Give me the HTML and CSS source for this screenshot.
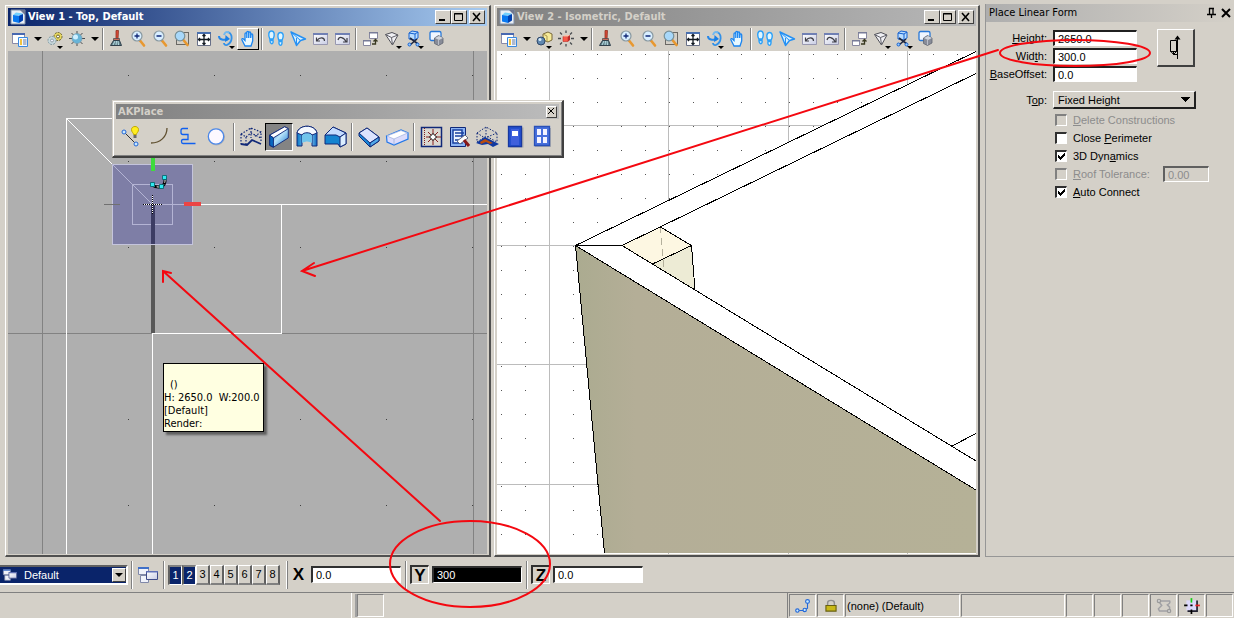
FILE: index.html
```html
<!DOCTYPE html>
<html lang="en">
<head>
<meta charset="utf-8">
<title>Place Linear Form</title>
<link rel="stylesheet" href="styles.css">
</head>
<body>
<svg class="defs" aria-hidden="true">
  <defs>
    <linearGradient id="blue" x1="0" y1="0" x2="1" y2="1"><stop offset="0" stop-color="#0a5ec0"/><stop offset=".5" stop-color="#b8e4fa"/><stop offset="1" stop-color="#1070c8"/></linearGradient>
    <linearGradient id="blueh" x1="0" y1="0" x2="1" y2="0"><stop offset="0" stop-color="#0878c8"/><stop offset=".6" stop-color="#a8dcfa"/><stop offset="1" stop-color="#0868c0"/></linearGradient>
    <linearGradient id="pane" x1="0" y1="0" x2="1" y2="1"><stop offset="0" stop-color="#fff"/><stop offset="1" stop-color="#c8cce4"/></linearGradient>
    <linearGradient id="wall" x1="0" y1="0" x2="1" y2="0"><stop offset="0" stop-color="#abab90"/><stop offset=".15" stop-color="#b4ae97"/><stop offset="1" stop-color="#b5b197"/></linearGradient>
    <pattern id="dots1" x="128" y="75" width="86" height="86" patternUnits="userSpaceOnUse"><rect width="1" height="1" fill="#404040"/></pattern>
    <pattern id="dots2" x="501" y="54" width="24" height="24" patternUnits="userSpaceOnUse"><rect width="1" height="1" fill="#555"/></pattern>
  </defs>
  <symbol id="app" viewBox="0 0 16 16"><path d="M1 1h14v14H1z" fill="#e8eef4" stroke="#8090a8"/><path d="M10 1l5 5V1z" fill="#707890"/><path d="M3 6l3-2.500 7 1-2 2z" fill="#70d0ff"/><path d="M3 6l6 .8V14l-6-1.500z" fill="#0878f0"/><path d="M9 6.800l4-1.800v6.500L9 14z" fill="#0040b0"/></symbol>
  <symbol id="attrs" viewBox="0 0 20 20"><path d="M2.500 4.500h12v10h-12z" fill="#fff" stroke="#8a8aa8"/><path d="M2 4h13v2H2z" fill="#4868b0"/><path d="M8.500 8.500h9v9h-9z" fill="#f4faff" stroke="#3888e0"/><path d="M10 11h2M10 13h2M10 15h2" stroke="#f0b000" stroke-width="1.500"/><path d="M13 11h3.500M13 13h3.500M13 15h3.500" stroke="#6878a0"/></symbol>
  <symbol id="styles-a" viewBox="0 0 20 20"><circle cx="13" cy="7.500" r="4" fill="#e8d860" stroke="#686030" stroke-dasharray="2 1"/><circle cx="13" cy="7.500" r="1.500" fill="#fff" stroke="#686030"/><circle cx="7" cy="11.500" r="4" fill="#c8d8dc" stroke="#8098a0" stroke-dasharray="2 1"/><circle cx="7" cy="11.500" r="1.500" fill="#eef" stroke="#90a0a8"/><path d="M12 17h6l-3 3z" fill="#000"/></symbol>
  <symbol id="styles-b" viewBox="0 0 20 20"><path d="M9 5l5-2 4 2v6l-4 2-5-2z" fill="#f6ea98" stroke="#786838"/><path d="M9 5l4 2v6" fill="none" stroke="#aa9850"/><circle cx="7" cy="12" r="4" fill="#6088b0" stroke="#304868"/><circle cx="6" cy="10.500" r="1.500" fill="#d8ecfa"/><path d="M12 17h6l-3 3z" fill="#000"/></symbol>
  <symbol id="sun-a" viewBox="0 0 20 20"><path d="M10 2v15M2 9.500h16M4.500 4l11 11M15.500 4l-11 11" stroke="#484c50"/><circle cx="10" cy="9.500" r="5" fill="#68b4d8" stroke="#7898a8" stroke-width=".6"/><circle cx="8.500" cy="8" r="2.500" fill="#d0f0ff"/></symbol>
  <symbol id="sun-b" viewBox="0 0 20 20"><path d="M10 1.500v2.500M10 15v2.500M2 9.500h3M15 9.500h3M4 3.500l2 2M16 3.500l-2 2M4 15.500l2-2M16 15.500l-2-2" stroke="#484c50" stroke-width="1.300"/><path d="M7 7.500h5v5H7z" fill="#f85848" stroke="#c03028" stroke-width=".6"/><path d="M7 7.500l2-1.500h5l-2 1.500z" fill="#ffc0a8"/><path d="M12 7.500l2-1.500v5l-2 1.500z" fill="#b82828"/></symbol>
  <symbol id="brush" viewBox="0 0 20 20"><path d="M10 1.500h2.500L12 10h-2z" fill="#d84838" stroke="#903020" stroke-width=".8"/><path d="M7.500 9.500h6v2h-6z" fill="#c86858" stroke="#404850" stroke-width=".7"/><path d="M7.500 11.500h6l2 5h-11z" fill="#608088" stroke="#30404c"/><path d="M7 16l2-4M10 16l.5-4M12.500 16l-.5-4" stroke="#b8dce4"/></symbol>
  <symbol id="lens" viewBox="0 0 20 20"><path d="M12 11.500l4 5" stroke="#e89830" stroke-width="2.600" stroke-linecap="round"/><circle cx="9" cy="7" r="5" fill="#d8eeff" stroke="#8898a0" stroke-width="1.200"/></symbol>
  <symbol id="zin" viewBox="0 0 20 20"><use href="#lens"/><path d="M6.500 7h5M9 4.500v5" stroke="#102878" stroke-width="1.300"/></symbol>
  <symbol id="zout" viewBox="0 0 20 20"><use href="#lens"/><path d="M6.500 7h5" stroke="#102878" stroke-width="1.500"/></symbol>
  <symbol id="zwin" viewBox="0 0 20 20"><path d="M4.500 3.500h12v12h-12z" fill="none" stroke="#000" stroke-dasharray="1 1"/><path d="M11 10.500l4.500 5.500" stroke="#e89830" stroke-width="2.600" stroke-linecap="round"/><circle cx="8" cy="7" r="4.800" fill="#a8d8fa" stroke="#789098" stroke-width="1.200"/></symbol>
  <symbol id="fit" viewBox="0 0 20 20"><path d="M3.500 3.500h13v13h-13z" fill="#fff" stroke="#687088"/><path d="M3 3h14v2H3z" fill="#4870b0"/><path d="M10 5.500v10M4.500 10.500h11M8.500 7L10 5.500 11.500 7M8.500 14l1.500 1.500 1.500-1.500M6 9l-1.500 1.500L6 12M14 9l1.500 1.500L14 12" fill="none" stroke="#101820" stroke-width="1.300"/></symbol>
  <symbol id="rot" viewBox="0 0 20 20"><path d="M12 3c5 2 5 10-1 13-2 .5-3-1-3-2" fill="none" stroke="#3090e8" stroke-width="1.800"/><path d="M13 4c-2-2-4-1-5 2" fill="none" stroke="#70b8f0" stroke-width="2"/><path d="M3 7c0 4 5 4.500 9 3" fill="none" stroke="#2888e8" stroke-width="2"/><path d="M9.500 6l4.500 4-5 3z" fill="#1880e8"/><path d="M13 17h6l-3 3z" fill="#000"/></symbol>
  <symbol id="hand" viewBox="0 0 20 20"><path d="M7 17l-3-6c-.5-1.500 1-2 2-.5l1 1V5c0-1.500 1.800-1.500 1.800 0v4V3.500c0-1.500 1.900-1.500 1.900 0V9l.2-5c0-1.400 1.800-1.400 1.800 0v5l.3-3c0-1.400 1.700-1.400 1.700 0v6l-1.700 5z" fill="#e8f8ff" stroke="#1a84f0" stroke-width="1.300"/></symbol>
  <symbol id="feet" viewBox="0 0 20 20"><path d="M5.500 2C2.500 2 2 6 3.800 10h3.400C9 6 8.500 2 5.500 2zM4 11.500h3c1 4-3 4.500-3 0zM14.500 3.500c3 0 3.500 4 1.700 7.500h-3.500c-1.500-4-1-7.500 1.800-7.500zM13 12.500h3c.5 5-3.800 5-3 0z" fill="#e0f6ff" stroke="#2ca0f8" stroke-width="1.400"/></symbol>
  <symbol id="fly" viewBox="0 0 20 20"><path d="M3 3l14.500 7-5 1.500-4 5z" fill="#d8f0ff" stroke="#2490f4" stroke-width="1.400" stroke-linejoin="round"/><path d="M3 3l9.500 8.500M8.500 16.500V9" fill="none" stroke="#2490f4"/></symbol>
  <symbol id="prev" viewBox="0 0 20 20"><path d="M3.500 4.500h14v11h-14z" fill="url(#pane)" stroke="#9898b0"/><path d="M3 4h15v2H3z" fill="#7080b4"/><path d="M14.500 12c0-4-5-4-7.500-.5M6.500 8.500v3.500h3.500" fill="none" stroke="#404048" stroke-width="1.200"/></symbol>
  <symbol id="next" viewBox="0 0 20 20"><path d="M3.500 4.500h14v11h-14z" fill="url(#pane)" stroke="#9898b0"/><path d="M3 4h15v2H3z" fill="#7080b4"/><path d="M6 11c1-4 6-3 8 1.500M15 9v4h-4" fill="none" stroke="#404048" stroke-width="1.200"/></symbol>
  <symbol id="copy" viewBox="0 0 20 20"><path d="M9.500 3.500h8v6h-8zM3.500 11.500h7v5h-7z" fill="#fff" stroke="#8888a0"/><path d="M9 3h9v1.500H9zM3 11h8v1.500H3z" fill="#787c98"/><path d="M12 15h3.500v-4M13.500 12.500l2-2 2 2" fill="none" stroke="#383820" stroke-width="1.300"/></symbol>
  <symbol id="cone" viewBox="0 0 20 20"><path d="M3.500 5.500l6.500-2 6 2.500-5.500 10z" fill="#f0f0f4" stroke="#505058"/><path d="M3.500 5.500l6 3 6.500-2.500M9.500 8.500l1 7.500" fill="none" stroke="#606068"/><path d="M14 17h6l-3 3z" fill="#000"/></symbol>
  <symbol id="clip" viewBox="0 0 20 20"><path d="M5 4l3-2 6 1v6l-3 2-6-1z" fill="#b8dcff" stroke="#1460d0"/><path d="M5 4l6 1 3-2M11 5v6" fill="none" stroke="#1460d0"/><path d="M6 9l8 6M13 10l-7 6" stroke="#202840" stroke-width="1.600"/><circle cx="5.500" cy="15.500" r="1.500" fill="#9cf" stroke="#1460d0"/><circle cx="13.500" cy="15.500" r="1.500" fill="#9cf" stroke="#1460d0"/><path d="M14 17h6l-3 3z" fill="#000"/></symbol>
  <symbol id="mask" viewBox="0 0 20 20"><rect x="4" y="2.500" width="11" height="9" rx="1.500" fill="#f0f6ff" stroke="#2878d8" stroke-width="1.300"/><path d="M8.500 9l4-2.500L17 9v5l-4.500 2.500-4-2z" fill="#888c98" stroke="#606470" stroke-width=".8"/><path d="M9 9l4 2 4-2-4-2z" fill="#d0d4dc"/><path d="M12.500 11v5" stroke="#d0d4dc" stroke-width=".7"/></symbol>
  <symbol id="smart" viewBox="0 0 28 28"><path d="M7 9l12 12" stroke="#303030"/><circle cx="7" cy="9" r="2" fill="#c8e8ff" stroke="#2468d8"/><circle cx="19" cy="21" r="2" fill="#c8e8ff" stroke="#2468d8"/><path d="M14.500 6.500c0-4 7-4 7 0 0 3-2 3-2 5h-3c0-2-2-2-2-5z" fill="#ffee20" stroke="#c0a800"/><path d="M16.500 12h3v3h-3z" fill="#68686c"/></symbol>
  <symbol id="arc" viewBox="0 0 28 28"><path d="M22 5c0 9-7 15-16 15" fill="none" stroke="#605030" stroke-width="1.300"/></symbol>
  <symbol id="curve" viewBox="0 0 28 28"><path d="M15 5.500H10q-2 0-2 2v2q0 2 2 2h5v5h-5q-1.500 0-1.500 2t1.500 2h12.500" fill="none" stroke="#1060f0" stroke-width="1.300"/></symbol>
  <symbol id="circle" viewBox="0 0 28 28"><circle cx="15.500" cy="14" r="8" fill="none" stroke="#b0b0b0"/><circle cx="15" cy="13.500" r="7.700" fill="#fcf8ff" stroke="#4c88e8" stroke-width="1.300"/></symbol>
  <symbol id="ghost" viewBox="0 0 28 28"><path d="M4 11v12M4 11l10-6 10 4v10M4 11l5 3 5-4 10 5M14 5v10M9 14v7M24 9l-7 5" fill="none" stroke="#102878" stroke-width="1.200" stroke-dasharray="1.500 1.500"/><path d="M4 21l6 1 5-5 9 4" fill="none" stroke="#102878" stroke-width="1.800"/></symbol>
  <symbol id="slab" viewBox="0 0 28 28"><path d="M4 12L20 3l4 2v10L8 25l-4-2z" fill="url(#blue)" stroke="#102878"/><path d="M4 12L20 3l4 2-16 10z" fill="#fff" stroke="#102878"/><path d="M4 12l4 3v10l-4-2z" fill="#0868c0" stroke="#102878"/></symbol>
  <symbol id="curved" viewBox="0 0 28 28"><path d="M4 10c2-9 18-9 20 0v13h-5V12c-1-3-9-3-10 0v11H4z" fill="url(#blueh)" stroke="#102878"/><path d="M9 12c1-4 9-4 10 0v8c-3-2-6-2-10 0z" fill="#70c4ec"/><path d="M4 10c2-9 18-9 20 0l-5 2c-1-3-9-3-10 0z" fill="#f4f8ff" stroke="#102878"/></symbol>
  <symbol id="poly" viewBox="0 0 28 28"><path d="M4 12l8-8 13 6v11l-6 3-2-3H4z" fill="#1484d0" stroke="#102878"/><path d="M4 12l8-8 13 6-6 4-4-2z" fill="#c4dcff" stroke="#102878"/><path d="M19 14l6-4v11l-6 3z" fill="#dceeff" stroke="#102878"/></symbol>
  <symbol id="book" viewBox="0 0 28 28"><path d="M4 10l8-5 12 9v4l-9 6L4 13z" fill="#1888d8" stroke="#102878"/><path d="M4 10l8-5 12 9-9 6z" fill="#dce4ff" stroke="#102878"/><path d="M15 20l9-6v4l-9 6z" fill="#50a8e8" stroke="#102878"/></symbol>
  <symbol id="eraser" viewBox="0 0 28 28"><path d="M3.500 13L18 7l7 3v6l-14 6-7-3z" fill="#dcdcfc" stroke="#2478e8" stroke-width="1.200"/><path d="M4 13l14-5.500 6.500 2.500L11 16z" fill="#fff" stroke="#a8b8e0" stroke-width=".8"/><path d="M11 16v5.500" stroke="#a8b8e0"/></symbol>
  <symbol id="grid" viewBox="0 0 28 28"><path d="M4.500 4.500h20v19h-20z" fill="#dcd8d0" stroke="#102878" stroke-width="1.500"/><path d="M7.500 5v18" stroke="#802020" stroke-dasharray="1 1"/><path d="M9 14h15M16 6v16M11 9l10 10M21 9L11 19" stroke="#882020"/><path d="M16 10.500l3.500 3.500-3.500 3.500-3.500-3.500z" fill="#fff" stroke="#000"/></symbol>
  <symbol id="build" viewBox="0 0 28 28"><path d="M5.500 4.500h15v19h-15z" fill="#8cb4f4" stroke="#102878"/><path d="M8 7h9v13H8zM10 10h9M10 13h9M10 17h6" fill="#f0f6ff" stroke="#1840a0" stroke-width="1.500"/><path d="M12 18l8-6 3 3-8 6z" fill="#fff" stroke="#606880"/><path d="M19 17l5 6" stroke="#881818" stroke-width="3"/></symbol>
  <symbol id="roof" viewBox="0 0 28 28"><path d="M4 10l9-6 11 6v9M4 10v9l9-6 11 6M13 4v9M4 10l8 5 12-5" fill="none" stroke="#102878" stroke-dasharray="1.500 1.500"/><path d="M3 20l9-6 14 7-6 3-5-3-6 1z" fill="#1038a0"/><path d="M7 19l5-3 8 4-3 1-4-2-5 2z" fill="#b84c10"/></symbol>
  <symbol id="door" viewBox="0 0 28 28"><path d="M8.500 4.500h14v20h-14z" fill="#aaa"/><path d="M7.500 3.500h13v20h-13z" fill="#2450d0" stroke="#1838a0" stroke-width="1.300"/><path d="M10 6h8v16h-8z" fill="#4060dc"/><path d="M11 8h6v5h-6z" fill="#fff"/></symbol>
  <symbol id="window" viewBox="0 0 28 28"><path d="M6 5h16v19H6z" fill="#aaa"/><path d="M5.500 3.500h15v19h-15z" fill="#4870dc" stroke="#2850b8" stroke-width="1.300"/><path d="M8 6h4v6H8zM14 6h4v6h-4zM8 14h4v6H8zM14 14h4v6h-4z" fill="#f4f4ff"/></symbol>
  <symbol id="groups" viewBox="0 0 24 20"><path d="M2.500 2.500h10v7h-10zM4.500 10.500h8v7h-8z" fill="#f0f2fa" stroke="#8088a8"/><path d="M2 2h11v2H2z" fill="#4070c8"/><path d="M10.500 6.500h11v8h-11z" fill="url(#pane)" stroke="#404c88"/><path d="M10 6h12v1.500H10z" fill="#6070b8"/></symbol>
</svg>

<div class="screen">
  <main class="workspace">
    <section class="view active" aria-label="View 1">
      <header class="titlebar">
        <svg class="app-icon"><use href="#app"/></svg>
        <h2>View 1 - Top, Default</h2>
        <button class="cap" aria-label="Minimize"><svg viewBox="0 0 12 10"><path d="M2 8h6" stroke="#000" stroke-width="2"/></svg></button>
        <button class="cap" aria-label="Maximize"><svg viewBox="0 0 12 10"><path d="M1.500 1.500h8v7h-8zM1 2h9" fill="none" stroke="#000"/></svg></button>
        <button class="cap close" aria-label="Close"><svg viewBox="0 0 12 10"><path d="M2 1l7 8M9 1L2 9" stroke="#000" stroke-width="1.600"/></svg></button>
      </header>
      <div class="toolbar" role="toolbar">
        <button aria-label="View attributes"><svg><use href="#attrs"/></svg></button><button class="drop" aria-label="More attributes"></button>
        <button aria-label="Display style"><svg><use href="#styles-a"/></svg></button>
        <button aria-label="Brightness"><svg><use href="#sun-a"/></svg></button><button class="drop" aria-label="More brightness"></button>
        <span class="sep tight"></span>
        <button aria-label="Update view"><svg><use href="#brush"/></svg></button>
        <button aria-label="Zoom in"><svg><use href="#zin"/></svg></button>
        <button aria-label="Zoom out"><svg><use href="#zout"/></svg></button>
        <button aria-label="Window area"><svg><use href="#zwin"/></svg></button>
        <button aria-label="Fit view"><svg><use href="#fit"/></svg></button>
        <button aria-label="Rotate view"><svg><use href="#rot"/></svg></button>
        <button class="on" aria-label="Pan view"><svg><use href="#hand"/></svg></button>
        <span class="sep"></span>
        <button aria-label="Walk"><svg><use href="#feet"/></svg></button>
        <button aria-label="Fly"><svg><use href="#fly"/></svg></button>
        <button aria-label="View previous"><svg><use href="#prev"/></svg></button>
        <button aria-label="View next"><svg><use href="#next"/></svg></button>
        <span class="sep"></span>
        <button aria-label="Copy view"><svg><use href="#copy"/></svg></button>
        <button aria-label="Change perspective"><svg><use href="#cone"/></svg></button>
        <button aria-label="Clip volume"><svg><use href="#clip"/></svg></button>
        <button aria-label="Clip mask"><svg><use href="#mask"/></svg></button>
      </div>
      <div class="canvas">
        <svg viewBox="8 51 479 503" preserveAspectRatio="xMinYMin slice" shape-rendering="crispEdges">
          <path fill="#afafaf" d="M8 51h900v900H8z"/>
          <path fill="url(#dots1)" d="M8 51h900v900H8z"/>
          <path d="M42.500 51v900M473.500 51v900M8 333.500h900" stroke="#828282"/>
          <path d="M500 118.500H66.500V951M66.500 118.500l86 86H900M281.500 204.500v129h-129V951" fill="none" stroke="#fff"/>
          <path d="M151 204h4v129h-4z" fill="#585858"/>
          <path d="M112.500 164.500h80v80h-80z" fill="#7e7ea6" stroke="#c4c4dc"/>
          <path d="M132.500 184.500h40v40h-40zM112.500 164.500l40 40h40" fill="none" stroke="#b4b4d4"/>
          <path d="M151 204h4v40h-4z" fill="#3c3c64"/>
          <path d="M104 204.500h16" stroke="#707070"/>
          <path d="M143 204.500h19M152.500 195v19" stroke="#fff"/>
          <path d="M143 204.500h19M152.500 195v19" stroke="#000" stroke-dasharray="1 1"/>
          <path d="M151 158h4v13h-4z" fill="#3edc3e"/>
          <path d="M184 202h17v4h-17z" fill="#ec4444"/>
          <g shape-rendering="auto">
            <path d="M152 185c5 3 14 4 13-7" fill="none" stroke="#000" stroke-width="3"/>
            <path d="M152 185c5 3 14 4 13-7" fill="none" stroke="#fff" stroke-dasharray="3 2"/>
            <path d="M150.500 182.500h4v4h-4zM159.500 184.500h4v4h-4zM162.500 175.500h4v4h-4z" fill="#30e8f0" stroke="#006068" stroke-width=".8"/>
          </g>
        </svg>
      </div>
    </section>

    <section class="view" aria-label="View 2">
      <header class="titlebar">
        <svg class="app-icon"><use href="#app"/></svg>
        <h2>View 2 - Isometric, Default</h2>
        <button class="cap" aria-label="Minimize"><svg viewBox="0 0 12 10"><path d="M2 8h6" stroke="#000" stroke-width="2"/></svg></button>
        <button class="cap" aria-label="Maximize"><svg viewBox="0 0 12 10"><path d="M1.500 1.500h8v7h-8zM1 2h9" fill="none" stroke="#000"/></svg></button>
        <button class="cap close" aria-label="Close"><svg viewBox="0 0 12 10"><path d="M2 1l7 8M9 1L2 9" stroke="#000" stroke-width="1.600"/></svg></button>
      </header>
      <div class="toolbar" role="toolbar">
        <button aria-label="View attributes"><svg><use href="#attrs"/></svg></button><button class="drop" aria-label="More attributes"></button>
        <button aria-label="Display style"><svg><use href="#styles-b"/></svg></button>
        <button aria-label="Brightness"><svg><use href="#sun-b"/></svg></button><button class="drop" aria-label="More brightness"></button>
        <span class="sep tight"></span>
        <button aria-label="Update view"><svg><use href="#brush"/></svg></button>
        <button aria-label="Zoom in"><svg><use href="#zin"/></svg></button>
        <button aria-label="Zoom out"><svg><use href="#zout"/></svg></button>
        <button aria-label="Window area"><svg><use href="#zwin"/></svg></button>
        <button aria-label="Fit view"><svg><use href="#fit"/></svg></button>
        <button aria-label="Rotate view"><svg><use href="#rot"/></svg></button>
        <button aria-label="Pan view"><svg><use href="#hand"/></svg></button>
        <span class="sep"></span>
        <button aria-label="Walk"><svg><use href="#feet"/></svg></button>
        <button aria-label="Fly"><svg><use href="#fly"/></svg></button>
        <button aria-label="View previous"><svg><use href="#prev"/></svg></button>
        <button aria-label="View next"><svg><use href="#next"/></svg></button>
        <span class="sep"></span>
        <button aria-label="Copy view"><svg><use href="#copy"/></svg></button>
        <button aria-label="Change perspective"><svg><use href="#cone"/></svg></button>
        <button aria-label="Clip volume"><svg><use href="#clip"/></svg></button>
        <button aria-label="Clip mask"><svg><use href="#mask"/></svg></button>
      </div>
      <div class="canvas">
        <svg viewBox="497 51 479 503" preserveAspectRatio="xMinYMin slice" shape-rendering="crispEdges">
          <path fill="#fff" d="M497 51h900v900H497z"/>
          <path fill="url(#dots2)" d="M497 51h900v900H497z"/>
          <path d="M549.500 51v900M668.500 51v900M788.500 51v900M907.500 51v900M497 125.500h900M497 245.500h900M497 364.500h900M497 484.500h900" stroke="#bcbcbc"/>
          <path d="M575 245.500L976 51v439L604 553z" fill="#fff"/>
          <path d="M575.500 245.500L976 490v63H604z" fill="url(#wall)"/>
          <path d="M622 245.500l38.500-18.500 31 18.500-39 18.500z" fill="#fdf7e2"/>
          <path d="M652.500 264l39-18.500 3.500 44.500z" fill="#edebd5"/>
          <path d="M660.500 227l3.500 44" stroke="#b4b09c" stroke-dasharray="7 4"/>
          <path d="M976 51.500l-400.500 194 400.500 244.500M976 73.500L622 245.500h-46.500l29 308M622 245.500L976 461M952 446l24-12.500M660.500 227l31 18.500-39 18.500M691.500 245.500l3.500 44.500" fill="none" stroke="#000"/>
        </svg>
      </div>
    </section>

    <aside class="settings">
      <header>
        <h2>Place Linear Form</h2>
        <button aria-label="Pin"><svg viewBox="0 0 12 12"><path d="M4 1.500h5M4.500 1v6M8 1v6M2 7.500h9M6.500 7v4" fill="none" stroke="#000" stroke-width="1.300"/></svg></button>
        <button aria-label="Close"><svg viewBox="0 0 12 12"><path d="M2 2l8 8M10 2l-8 8" stroke="#000" stroke-width="2"/></svg></button>
      </header>
      <form>
        <div class="dims">
          <label for="h"><u>H</u>eight:</label><input id="h" value="2650.0">
          <label for="w">Wid<u>t</u>h:</label><input id="w" value="300.0">
          <label for="b"><u>B</u>aseOffset:</label><input id="b" value="0.0">
          <button type="button" class="side" aria-label="Placement side"><svg viewBox="0 0 32 32"><path d="M17.500 6v23M16.500 21.500h-6v-11h6zM16.500 10.500v11l-3 3v-3M10.500 21l3 3.500h4" fill="none" stroke="#000"/><path d="M14.500 9.500l3-4 3 4z"/></svg></button>
        </div>
        <div class="top-row">
          <label for="top">T<u>o</u>p:</label>
          <select id="top"><option>Fixed Height</option></select>
        </div>
        <div class="checks">
          <label class="off"><input type="checkbox" disabled><span><u>D</u>elete Constructions</span></label>
          <label><input type="checkbox"><span>Close <u>P</u>erimeter</span></label>
          <label><input type="checkbox" checked><span>3D Dyn<u>a</u>mics</span></label>
          <div class="tol"><label class="off"><input type="checkbox" disabled><span><u>R</u>oof Tolerance:</span></label><input class="num" aria-label="Roof tolerance" value="0.00" disabled></div>
          <label><input type="checkbox" checked><span><u>A</u>uto Connect</span></label>
        </div>
      </form>
    </aside>
  </main>

  <div class="accu">
    <div class="combo">
      <svg viewBox="0 0 24 20"><use href="#groups"/></svg>
      <select aria-label="View group"><option>Default</option></select>
      <span class="combo-arrow"></span>
    </div>
    <span class="sep"></span>
    <button class="group-btn" aria-label="Manage view groups"><svg><use href="#groups"/></svg></button>
    <span class="sep"></span>
    <div class="nums"><button class="on">1</button><button class="on">2</button><button>3</button><button>4</button><button>5</button><button>6</button><button>7</button><button>8</button></div>
    <span class="sep raised"></span>
    <div class="axis"><label for="ax">X</label><input id="ax" value="0.0"></div>
    <span class="sep wide"></span>
    <div class="axis locked current"><label for="ay">Y</label><input id="ay" value="300"></div>
    <span class="sep wide"></span>
    <div class="axis locked"><label for="az">Z</label><input id="az" value="0.0"></div>
  </div>

  <footer class="status">
    <div class="message"></div>
    <div class="cell box"></div>
    <div class="fill"></div>
    <div class="cell"><svg viewBox="0 0 16 16"><path d="M3 12h6l3-2V4" fill="none" stroke="#2468d8"/><circle cx="3" cy="12" r="1.500" fill="#cef" stroke="#2468d8"/><circle cx="9.500" cy="11.500" r="1.500" fill="#cef" stroke="#2468d8"/><circle cx="12" cy="4" r="1.700" fill="#cef" stroke="#2468d8"/></svg></div>
    <div class="cell"><svg viewBox="0 0 16 16"><path d="M5 8V5q0-2 3-2t3 2v3" fill="none" stroke="#909090" stroke-width="1.300"/><path d="M3.500 7.500h9v5h-9z" fill="#c8b818" stroke="#686010"/></svg></div>
    <div class="cell model">(none) (Default)</div>
    <div class="cell wide"></div>
    <div class="cell"></div>
    <div class="cell"></div>
    <div class="cell"></div>
    <div class="cell"><svg viewBox="0 0 16 16"><path d="M3 3.500h10q1 2-2 3.500l2 2v3.500H4l-1-2 3-3z" fill="none" stroke="#a0a0a4" stroke-width="1.300"/><circle cx="3.500" cy="3.500" r="1.500" fill="#ccc" stroke="#999"/><circle cx="12.500" cy="12.500" r="1.500" fill="#ccc" stroke="#999"/></svg></div>
    <div class="cell"><svg viewBox="0 0 16 16"><path d="M3 3h9v9H3z" fill="#dcd8fc"/><path d="M4 12.500h8.500V3" fill="none" stroke="#202030" stroke-width="1.500"/><path d="M1 7.500h3M6.500 7.500h2M7.500 11v4" stroke="#000" stroke-width="1.500"/><path d="M7.500 1v4" stroke="#10d010" stroke-width="1.500"/><path d="M11 7.500h4" stroke="#e82020" stroke-width="1.500"/></svg></div>
    <div class="cell"></div>
  </footer>

  <section class="palette" aria-label="AKPlace">
    <header><h2>AKPlace</h2><button aria-label="Close palette"><svg viewBox="0 0 9 9"><path d="M1 1l6 6M7 1L1 7" stroke="#000"/></svg></button></header>
    <div class="tools" role="toolbar">
      <button aria-label="SmartLine"><svg><use href="#smart"/></svg></button>
      <button aria-label="Arc"><svg><use href="#arc"/></svg></button>
      <button aria-label="Curve"><svg><use href="#curve"/></svg></button>
      <button aria-label="Circle"><svg><use href="#circle"/></svg></button>
      <span class="sep wide"></span>
      <button aria-label="Space form"><svg><use href="#ghost"/></svg></button>
      <button class="on" aria-label="Linear form"><svg><use href="#slab"/></svg></button>
      <button aria-label="Arc form"><svg><use href="#curved"/></svg></button>
      <button aria-label="Curved form"><svg><use href="#poly"/></svg></button>
      <span class="sep"></span>
      <button aria-label="Slab form"><svg><use href="#book"/></svg></button>
      <button aria-label="Free form"><svg><use href="#eraser"/></svg></button>
      <span class="sep"></span>
      <button aria-label="Grid"><svg><use href="#grid"/></svg></button>
      <button aria-label="Building"><svg><use href="#build"/></svg></button>
      <button aria-label="Roof"><svg><use href="#roof"/></svg></button>
      <button aria-label="Door"><svg><use href="#door"/></svg></button>
      <button aria-label="Window"><svg><use href="#window"/></svg></button>
    </div>
  </section>

  <div class="tip" role="tooltip"><p class="mark">()</p><p>H: 2650.0&nbsp; W:200.0</p><p>[Default]</p><p>Render:</p></div>

  <svg class="notes" viewBox="0 0 1234 618" preserveAspectRatio="xMinYMin" aria-hidden="true">
    <g fill="none" stroke="#f40810" stroke-width="2" stroke-linecap="round">
      <ellipse cx="1075" cy="53" rx="75" ry="13"/>
      <path d="M998 50L302 271M314 263l-12 8 13 5"/>
      <ellipse cx="470" cy="564" rx="80" ry="43"/>
      <path d="M440 521L163 271M163 282v-11l8 2"/>
    </g>
  </svg>
</div>
</body>
</html>
```
FILE: styles.css
```css
* { box-sizing: border-box; margin: 0; }
body { background: #d4d0c8; color: #000; font: 11px/14px "Liberation Sans", Arial, sans-serif; }
button, input, select { font: inherit; color: inherit; border: 0; border-radius: 0; padding: 0; background: none; appearance: none; }
h2 { font: bold 11px/18px "DejaVu Sans Condensed", "DejaVu Sans", sans-serif; }
.defs { position: absolute; width: 0; height: 0; }
.screen { position: relative; display: flex; flex-direction: column; min-height: 100vh; overflow: hidden; }
.sep { width: 2px; border-left: 1px solid #808080; background: #fff; }

.workspace { flex: 1; display: flex; padding: 4px 0 0 5px; }

/* view windows */
.view { flex: 1; min-width: 0; display: flex; flex-direction: column; margin: 1px 3px 0 0; padding: 2px 2px 1px; border: 1px solid #fff; border-width: 1px 2px 2px 1px; border-right-color: #505050; border-bottom-color: #505050; }
.view + .view { margin-right: 5px; }
.titlebar { display: flex; align-items: center; height: 18px; padding: 0 2px; background: linear-gradient(90deg, #808080, #b8b8b8); color: #d4d0c8; }
.active .titlebar { background: linear-gradient(90deg, #0a246a, #a6caf0); color: #fff; }
.titlebar h2 { flex: 1; padding-left: 2px; }
.app-icon { width: 16px; height: 16px; }
.cap { width: 16px; height: 14px; display: grid; place-items: center; background: #d4d0c8; border: 1px solid #fff; border-right-color: #404040; border-bottom-color: #404040; }
.cap.close { margin-left: 2px; }
.cap svg { width: 12px; height: 10px; }
.toolbar { display: flex; align-items: center; height: 25px; padding-left: 1px; }
.toolbar button { width: 22px; height: 22px; display: grid; place-items: center; }
.toolbar svg { width: 20px; height: 20px; }
.toolbar .drop { width: 13px; }
.drop::after, .combo-arrow::after { content: ""; border: 4px solid transparent; border-top-color: #000; border-bottom: 0; }
.toolbar .on { border: 1px solid #fff; border-right-color: #000; border-bottom-color: #000; }
.toolbar .sep { height: 22px; margin: 0 2px; }
.toolbar .tight { margin: 0 1px; }
.canvas { flex: 1; position: relative; min-height: 300px; overflow: hidden; }
.canvas svg { position: absolute; width: 100%; height: 100%; }

/* tool settings */
.settings { width: 249px; border: 1px solid #969696; border-width: 0 0 1px 1px; }
.settings header { display: flex; align-items: center; height: 18px; padding: 0 1px 0 3px; background: linear-gradient(90deg, #aeaeae, #d4d0c8); }
.settings h2 { flex: 1; font-weight: normal; }
.settings header button { width: 15px; height: 12px; }
.settings header svg { width: 12px; height: 12px; }
form { padding-top: 7px; display: grid; gap: 8px; }
.dims { display: grid; grid-template-columns: 61px 84px 38px; grid-template-rows: repeat(3, 18px); column-gap: 6px; align-items: center; }
.dims label, .top-row label { text-align: right; }
.dims input, .num { width: 100%; height: 16px; background: #fff; border: 1px solid #fff; border-top: 2px solid #202020; border-left: 2px solid #202020; padding-left: 3px; }
.side { grid-column: 3; grid-row: 1 / 4; width: 38px; height: 38px; margin-left: 14px; align-self: start; border: 1px solid #fff; border-right: 2px solid #404040; border-bottom: 2px solid #404040; }
.side svg { width: 32px; height: 32px; }
.top-row { display: grid; grid-template-columns: 61px 143px; column-gap: 6px; align-items: center; }
.top-row select { height: 18px; padding-left: 4px; border: 1px solid #fff; border-right: 2px solid #202020; border-bottom: 2px solid #202020; background: linear-gradient(#000, #000) right 4px top 5px / 9px 1px no-repeat, linear-gradient(#000, #000) right 5px top 6px / 7px 1px no-repeat, linear-gradient(#000, #000) right 6px top 7px / 5px 1px no-repeat, linear-gradient(#000, #000) right 7px top 8px / 3px 1px no-repeat, linear-gradient(#000, #000) right 8px top 9px / 1px 1px no-repeat; }
.checks { padding-left: 69px; display: grid; grid-auto-rows: 18px; margin-top: -6px; }
.checks label { display: flex; align-items: center; gap: 6px; }
.checks [type=checkbox] { width: 12px; height: 12px; background: #fff; border: 1px solid #fff; border-top: 2px solid #303030; border-left: 2px solid #303030; }
.checks :checked { background: no-repeat #fff; background-image: linear-gradient(#000, #000), linear-gradient(#000, #000), linear-gradient(#000, #000), linear-gradient(#000, #000), linear-gradient(#000, #000), linear-gradient(#000, #000), linear-gradient(#000, #000); background-size: 1px 3px; background-position: 1px 3px, 2px 4px, 3px 5px, 4px 4px, 5px 3px, 6px 2px, 7px 1px; }
.checks .off { color: #8c8c8c; }
.checks .off input { background: #d4d0c8; border-color: #808080 #fff #fff #808080; }
.tol { display: flex; align-items: center; justify-content: space-between; width: 154px; }
.num { width: 46px; background: #d4d0c8; color: #8c8c8c; border-color: #606060 #fff #fff #606060; }

/* coordinates bar */
.accu { display: flex; align-items: center; height: 36px; border-bottom: 1px solid #808080; }
.accu .sep { height: 28px; margin: 0 3px; }
.accu .wide { margin: 0 3px 0 4px; }
.combo { position: relative; display: flex; align-items: center; width: 128px; height: 20px; background: #0a246a; color: #fff; border: 2px solid #fff; border-width: 2px 2px 2px 0; border-top-color: #606060; }
.combo svg { width: 18px; height: 14px; margin-left: 1px; }
.combo select { flex: 1; padding-left: 5px; }
.combo-arrow { position: absolute; right: 0; top: 1px; width: 14px; height: 14px; background: #d4d0c8; display: grid; place-items: center; border: 1px solid #fff; border-right-color: #404040; border-bottom-color: #404040; pointer-events: none; }
.group-btn svg { width: 24px; height: 20px; display: block; }
.nums { display: flex; }
.nums button { width: 14px; height: 20px; border: 1px solid #fff; border-right: 2px solid #606060; border-bottom: 2px solid #808080; }
.nums .on { background: #0a246a; color: #fff; border: 1px solid #fff; border-top: 2px solid #808080; border-left: 2px solid #606060; }
.axis { display: flex; align-items: center; gap: 3px; }
.axis label { width: 19px; height: 19px; text-align: center; font-weight: bold; font-size: 17px; line-height: 19px; }
.axis input { width: 90px; height: 17px; background: #fff; border: 1px solid #fff; border-top: 2px solid #303030; border-left: 2px solid #303030; padding-left: 3px; }
.axis.locked label { border: 1px solid #fff; border-top: 2px solid #303030; border-left: 2px solid #303030; line-height: 17px; }
.axis.current input { background: #000; color: #fff; }
.accu .raised { margin: 0 1px 0 6px; border: 0; border-right: 1px solid #808080; }

/* status bar */
.status { display: flex; height: 25px; padding-top: 1px; gap: 1px; }
.message { width: 352px; border-right: 1px solid #fff; margin: -1px 4px 0 0; }
.fill { flex: 1; margin: -1px 0 0; border-right: 1px solid #808080; }
.cell { width: 27px; height: 23px; border: 1px solid #808080; border-right-color: #fff; border-bottom-color: #fff; display: flex; align-items: center; justify-content: center; }
.cell:last-child { margin-right: 1px; }
.cell svg { width: 18px; height: 18px; }
.box { box-shadow: -2px 0 0 #a0a0a0; }
.model { width: 115px; justify-content: flex-start; padding-left: 1px; }
.status .wide { width: 104px; }

/* floating tool palette */
.palette { position: absolute; left: 112px; top: 100px; width: 452px; height: 58px; background: #d4d0c8; border: 1px solid #d4d0c8; border-right: 2px solid #404040; border-bottom: 2px solid #404040; box-shadow: inset 1px 1px #fff, inset -1px -1px #808080; padding: 3px; }
.palette header { display: flex; align-items: center; height: 15px; padding: 0 2px; background: linear-gradient(90deg, #808080, #bcbcbc); }
.palette h2 { flex: 1; color: #d4d0c8; line-height: 15px; }
.palette header button { width: 11px; height: 12px; background: #d4d0c8; border: 1px solid #fff; border-right-color: #404040; border-bottom-color: #404040; display: grid; place-items: center; }
.palette header svg { width: 9px; height: 9px; }
.tools { display: flex; padding: 4px 0 0 1px; }
.tools button { width: 28px; height: 28px; }
.tools svg { width: 28px; height: 28px; display: block; }
.tools .on { background: #848484; border: 1px solid #000; border-right-color: #fff; border-bottom-color: #fff; }
.tools .on svg { width: 26px; height: 26px; }
.tools .sep { margin: 0 2px; }
.tools .wide { margin: 0 2px 0 4px; }

.tip { position: absolute; left: 163px; top: 363px; width: 101px; padding: 14px 0 1px; background: #ffffe1; border: 1px solid #000; box-shadow: 3px 3px 2px #606060; font: 11px/13px "DejaVu Sans Condensed", "DejaVu Sans", sans-serif; white-space: nowrap; }
.mark { padding-left: 6px; }
.notes { position: absolute; left: 0; top: 0; width: 1234px; height: 618px; pointer-events: none; }
```
